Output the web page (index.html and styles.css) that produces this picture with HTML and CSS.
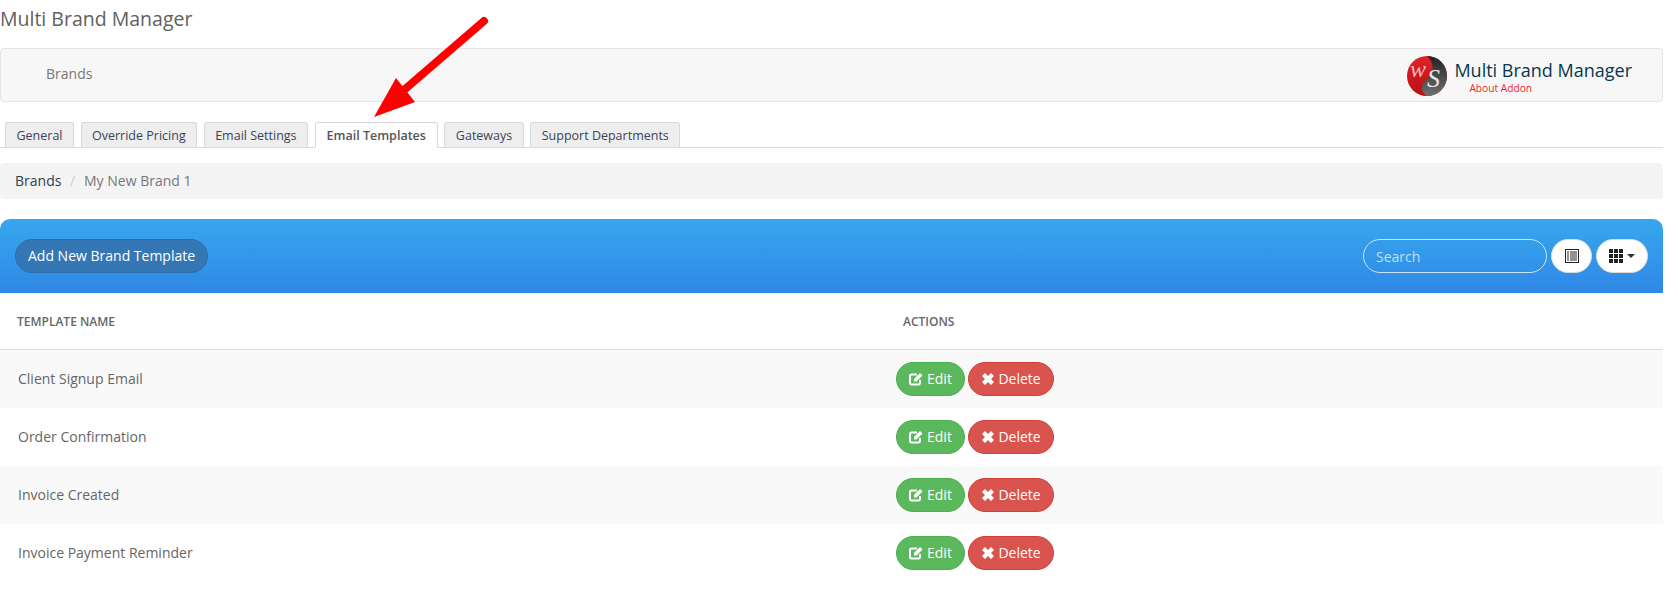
FILE: index.html
```html
<!DOCTYPE html>
<html lang="en">
<head>
<meta charset="utf-8">
<title>Multi Brand Manager</title>
<link rel="stylesheet" href="styles.css">
</head>
<body>
<div class="page">
  <h1 class="title">Multi Brand Manager</h1>
  <div class="topbar">
    <span class="topbar-link">Brands</span>
    <div class="addon">
      <svg class="logo" viewBox="0 0 40 40" width="40" height="40">
        <defs>
          <linearGradient id="lr" x1="0" y1="0" x2="0" y2="1"><stop offset="0" stop-color="#e02428"/><stop offset="1" stop-color="#b81015"/></linearGradient>
          <linearGradient id="ld" x1="0" y1="0" x2="0" y2="1"><stop offset="0" stop-color="#222"/><stop offset="1" stop-color="#707070"/></linearGradient>
        </defs>
        <circle cx="20" cy="20" r="20" fill="url(#lr)"/>
        <path d="M20 0A20 20 0 0 1 20 40C14 36 13 30 19 24C27 17 28 7 20 0Z" fill="url(#ld)"/>
        <text x="3" y="21" class="logo-w">w</text>
        <text x="20" y="31" class="logo-s">S</text>
      </svg>
      <div class="addon-text">
        <div class="addon-name">Multi Brand Manager</div>
        <div class="addon-about">About Addon</div>
      </div>
    </div>
  </div>
  <ul class="tabs">
    <li class="tab">General</li>
    <li class="tab">Override Pricing</li>
    <li class="tab">Email Settings</li>
    <li class="tab active">Email Templates</li>
    <li class="tab">Gateways</li>
    <li class="tab">Support Departments</li>
  </ul>
  <div class="crumbs"><span class="crumb-link">Brands</span><span class="crumb-sep">/</span><span>My New Brand 1</span></div>
  <div class="toolbar">
    <button class="add-btn">Add New Brand Template</button>
    <div class="tools">
      <input class="search" placeholder="Search">
      <button class="round-btn">
        <svg width="14" height="14" viewBox="0 0 14 14"><rect x="0.5" y="0.5" width="13" height="13" fill="none" stroke="#222"/><path d="M2 3h2M5 3h7M2 5h2M5 5h7M2 7h2M5 7h7M2 9h2M5 9h7M2 11h2M5 11h7" stroke="#222" stroke-width="1"/></svg>
      </button>
      <button class="round-btn wide">
        <svg width="14" height="14" viewBox="0 0 14 14" fill="#222"><path d="M0 0h4v4H0zM5 0h4v4H5zM10 0h4v4h-4zM0 5h4v4H0zM5 5h4v4H5zM10 5h4v4h-4zM0 10h4v4H0zM5 10h4v4H5zM10 10h4v4h-4z"/></svg>
        <span class="caret"></span>
      </button>
    </div>
  </div>
  <div class="thead"><div class="col-name">TEMPLATE NAME</div><div>ACTIONS</div></div>
  <div class="row odd"><div class="col-name">Client Signup Email</div><div class="actions"><button class="btn edit"><svg class="ico" viewBox="0 0 14 14"><path d="M11 8v3a1.500 1.500 0 0 1-1.500 1.500h-7A1.500 1.500 0 0 1 1 11V4a1.500 1.500 0 0 1 1.500-1.500H8" fill="none" stroke="#fff" stroke-width="2"/><path d="M5 7l6-6 2.500 2.500-6 6H5z" fill="#fff"/></svg><span class="btn-label">Edit</span></button><button class="btn del"><svg class="ico" viewBox="0 0 14 14"><path d="M1 4L4 1 7 4 10 1 13 4 10 7 13 10 10 13 7 10 4 13 1 10 4 7z" fill="#fff"/></svg><span class="btn-label">Delete</span></button></div></div>
  <div class="row"><div class="col-name">Order Confirmation</div><div class="actions"><button class="btn edit"><svg class="ico" viewBox="0 0 14 14"><path d="M11 8v3a1.500 1.500 0 0 1-1.500 1.500h-7A1.500 1.500 0 0 1 1 11V4a1.500 1.500 0 0 1 1.500-1.500H8" fill="none" stroke="#fff" stroke-width="2"/><path d="M5 7l6-6 2.500 2.500-6 6H5z" fill="#fff"/></svg><span class="btn-label">Edit</span></button><button class="btn del"><svg class="ico" viewBox="0 0 14 14"><path d="M1 4L4 1 7 4 10 1 13 4 10 7 13 10 10 13 7 10 4 13 1 10 4 7z" fill="#fff"/></svg><span class="btn-label">Delete</span></button></div></div>
  <div class="row odd"><div class="col-name">Invoice Created</div><div class="actions"><button class="btn edit"><svg class="ico" viewBox="0 0 14 14"><path d="M11 8v3a1.500 1.500 0 0 1-1.500 1.500h-7A1.500 1.500 0 0 1 1 11V4a1.500 1.500 0 0 1 1.500-1.500H8" fill="none" stroke="#fff" stroke-width="2"/><path d="M5 7l6-6 2.500 2.500-6 6H5z" fill="#fff"/></svg><span class="btn-label">Edit</span></button><button class="btn del"><svg class="ico" viewBox="0 0 14 14"><path d="M1 4L4 1 7 4 10 1 13 4 10 7 13 10 10 13 7 10 4 13 1 10 4 7z" fill="#fff"/></svg><span class="btn-label">Delete</span></button></div></div>
  <div class="row"><div class="col-name">Invoice Payment Reminder</div><div class="actions"><button class="btn edit"><svg class="ico" viewBox="0 0 14 14"><path d="M11 8v3a1.500 1.500 0 0 1-1.500 1.500h-7A1.500 1.500 0 0 1 1 11V4a1.500 1.500 0 0 1 1.500-1.500H8" fill="none" stroke="#fff" stroke-width="2"/><path d="M5 7l6-6 2.500 2.500-6 6H5z" fill="#fff"/></svg><span class="btn-label">Edit</span></button><button class="btn del"><svg class="ico" viewBox="0 0 14 14"><path d="M1 4L4 1 7 4 10 1 13 4 10 7 13 10 10 13 7 10 4 13 1 10 4 7z" fill="#fff"/></svg><span class="btn-label">Delete</span></button></div></div>
</div>
<svg class="arrow" width="500" height="130" viewBox="0 0 500 130">
  <path d="M484 21L404 90" stroke="#f00" stroke-width="8" stroke-linecap="round" fill="none"/>
  <path d="M374 117L396 78L415 102Z" fill="#f00"/>
</svg>
</body>
</html>
```
FILE: styles.css
```css
* { box-sizing: border-box; }
html, body { margin: 0; padding: 0; background: #fff; overflow: hidden; }
body { font-family: "Open Sans", sans-serif; font-size: 13px; color: #666; }
.page { width: 1663px; }
.title { margin: 0; height: 48px; padding: 5px 0 0 0; font-size: 19.500px; line-height: 27px; font-weight: 400; color: #5f5f5f; }
.topbar { height: 54px; background: #f7f7f7; border: 1px solid #e4e4e4; border-radius: 4px; display: flex; align-items: center; justify-content: space-between; padding: 0 30px 0 45px; }
.topbar-link { font-size: 14px; color: #777; margin-top: -3px; }
.addon { display: flex; align-items: center; gap: 7px; margin-top: 1px; }
.logo { display: block; }
.logo-w { font-family: "Liberation Serif", serif; font-style: italic; font-size: 24px; fill: #f2b8b8; }
.logo-s { font-family: "Liberation Serif", serif; font-style: italic; font-size: 26px; fill: #e8e8e8; }
.addon-text { height: 34px; margin-top: -2px; }
.addon-name { font-size: 18px; line-height: 25px; color: #06384f; }
.addon-about { font-size: 10.200px; line-height: 12px; color: #f01c2c; padding-left: 15px; margin-top: -1px; }
.tabs { list-style: none; margin: 0; padding: 0 0 0 5px; height: 46px; display: flex; align-items: flex-end; gap: 6.500px; border-bottom: 1px solid #dcdcdc; }
.tab { height: 26px; padding: 0 10.500px; margin-bottom: -1px; background: #eee; border: 1px solid #d8d8d8; border-bottom-color: #dcdcdc; border-radius: 3px 3px 0 0; font-size: 12.500px; line-height: 25px; color: #3c4358; }
.tab.active { padding: 0 11px; background: #fff; border-bottom-color: #fff; color: #555; font-weight: 600; }
.crumbs { margin-top: 15px; height: 36px; background: #f4f4f4; border-radius: 4px; padding: 0 15px 2px; display: flex; align-items: center; font-size: 14px; color: #777; }
.crumb-link { color: #2c3e50; }
.crumb-sep { color: #ccc; padding: 0 9px 0 8.500px; }
.toolbar { margin-top: 20px; height: 74px; border-radius: 10px 10px 0 0; background: linear-gradient(#37a7ee, #2f88e6); display: flex; align-items: center; justify-content: space-between; padding: 0 15px; }
.add-btn { height: 34px; padding: 0 12px 2px; border-radius: 17px; border: 1px solid #2f6da8; background: #3577b4; color: #fff; font: 400 14px "Open Sans", sans-serif; }
.tools { display: flex; align-items: center; gap: 4px; }
.search { width: 184px; height: 34px; border-radius: 17px; border: 1px solid #cfe3f6; background: transparent; padding: 0 12px; color: #fff; font: 400 14px "Open Sans", sans-serif; }
.search::placeholder { color: #c3def7; opacity: 1; }
.round-btn { width: 41px; height: 34px; border-radius: 17px; border: 1px solid #ddd; background: #fff; padding: 0; display: flex; align-items: center; justify-content: center; gap: 4px; }
.round-btn.wide { width: 52px; }
.caret { width: 0; height: 0; border: 4px solid transparent; border-top-color: #333; border-bottom: 0; }
.thead, .row { display: flex; align-items: center; }
.thead { height: 57px; border-bottom: 1px solid #ddd; font-size: 12px; font-weight: 600; color: #666; }
.thead .col-name { padding-left: 17px; }
.row { height: 58px; font-size: 14px; color: #666; }
.row.odd { background: #f9f9f9; }
.col-name { width: 903px; padding-left: 18px; flex: none; margin-top: -2px; }
.thead .col-name { margin-top: 0; }
.actions { display: flex; gap: 3px; margin-left: -7px; }
.btn { height: 34px; border-radius: 17px; padding: 0 12px; color: #fff; font: 400 14px "Open Sans", sans-serif; display: flex; align-items: center; gap: 4px; }
.btn-label { margin-top: -2px; }
.ico { width: 14px; height: 14px; display: block; }
.edit { background: #5cb85c; border: 1px solid #4cae4c; }
.del { padding: 0 12.500px; gap: 3px; background: #d9534f; border: 1px solid #d43f3a; }
.arrow { position: absolute; left: 0; top: 0; pointer-events: none; }
```
